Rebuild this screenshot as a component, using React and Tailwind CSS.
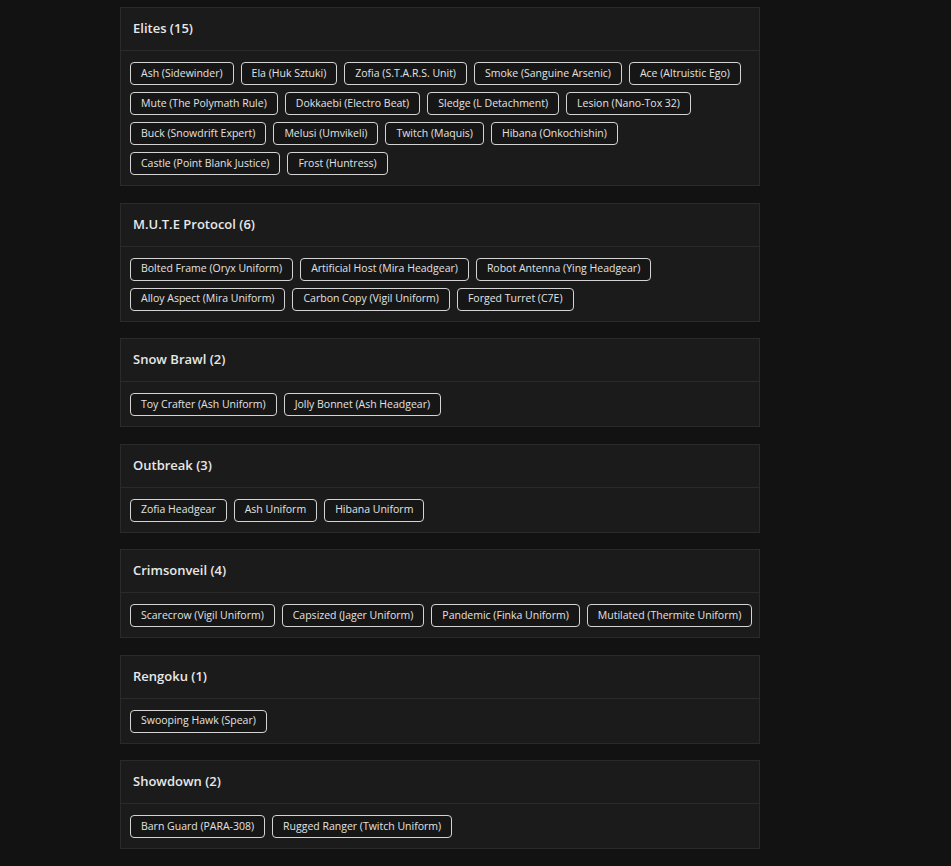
import React from "react";

const sections = [
  {
    title: "Elites (15)",
    items: [
      "Ash (Sidewinder)",
      "Ela (Huk Sztuki)",
      "Zofia (S.T.A.R.S. Unit)",
      "Smoke (Sanguine Arsenic)",
      "Ace (Altruistic Ego)",
      "Mute (The Polymath Rule)",
      "Dokkaebi (Electro Beat)",
      "Sledge (L Detachment)",
      "Lesion (Nano-Tox 32)",
      "Buck (Snowdrift Expert)",
      "Melusi (Umvikeli)",
      "Twitch (Maquis)",
      "Hibana (Onkochishin)",
      "Castle (Point Blank Justice)",
      "Frost (Huntress)",
    ],
  },
  {
    title: "M.U.T.E Protocol (6)",
    items: [
      "Bolted Frame (Oryx Uniform)",
      "Artificial Host (Mira Headgear)",
      "Robot Antenna (Ying Headgear)",
      "Alloy Aspect (Mira Uniform)",
      "Carbon Copy (Vigil Uniform)",
      "Forged Turret (C7E)",
    ],
  },
  {
    title: "Snow Brawl (2)",
    items: ["Toy Crafter (Ash Uniform)", "Jolly Bonnet (Ash Headgear)"],
  },
  {
    title: "Outbreak (3)",
    items: ["Zofia Headgear", "Ash Uniform", "Hibana Uniform"],
  },
  {
    title: "Crimsonveil (4)",
    items: [
      "Scarecrow (Vigil Uniform)",
      "Capsized (Jager Uniform)",
      "Pandemic (Finka Uniform)",
      "Mutilated (Thermite Uniform)",
    ],
  },
  {
    title: "Rengoku (1)",
    items: ["Swooping Hawk (Spear)"],
  },
  {
    title: "Showdown (2)",
    items: ["Barn Guard (PARA-308)", "Rugged Ranger (Twitch Uniform)"],
  },
];

export default function App() {
  return (
    <div
      className="bg-[#121212] pt-[7px] pl-[120px] overflow-hidden h-[866px]"
      style={{ fontFamily: '"Open Sans", "Liberation Sans", sans-serif' }}
    >
      <div className="w-[640px] flex flex-col gap-[16.5px]">
        {sections.map((s) => (
          <div key={s.title} className="bg-[#1b1b1b] border border-[#2a2a2a]">
            <div className="h-[43px] flex items-center px-[12px] border-b border-[#2a2a2a]">
              <span className="text-[13px] font-semibold text-[#e8e8e8]">
                {s.title}
              </span>
            </div>
            <div className="flex flex-wrap gap-x-[7px] gap-y-[7px] pl-[9px] pr-[2px] pt-[11px] pb-[10px]">
              {s.items.map((it) => (
                <span
                  key={it}
                  className="h-[23px] flex items-center px-[10px] rounded-[4px] border border-[#d4d4d4] bg-[#161616] text-[10.5px] text-[#e2e2e2] whitespace-nowrap"
                >
                  {it}
                </span>
              ))}
            </div>
          </div>
        ))}
        <div className="h-[60px] bg-[#1b1b1b] border border-[#2a2a2a]" />
      </div>
    </div>
  );
}
